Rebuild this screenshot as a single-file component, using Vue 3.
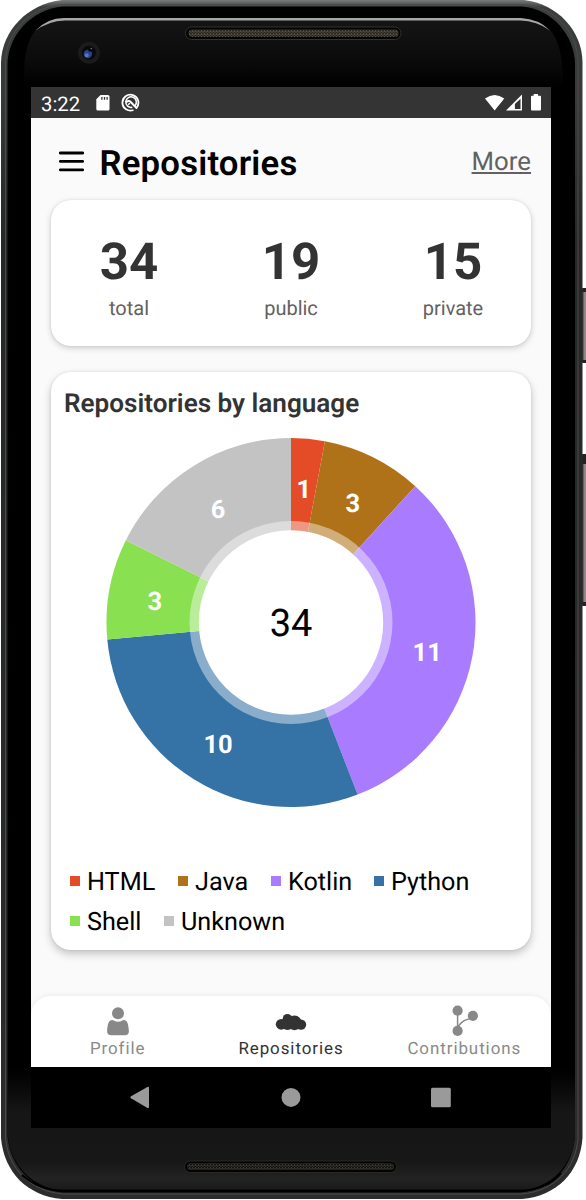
<script setup>
const stats = [
  { value: 34, label: 'total' },
  { value: 19, label: 'public' },
  { value: 15, label: 'private' }
]

const languages = [
  { name: 'HTML', count: 1, color: '#e34c26', width: 108 },
  { name: 'Java', count: 3, color: '#b07219', width: 93 },
  { name: 'Kotlin', count: 11, color: '#a97bff', width: 103 },
  { name: 'Python', count: 10, color: '#3572a5', width: 110 },
  { name: 'Shell', count: 3, color: '#89e051', width: 94 },
  { name: 'Unknown', count: 6, color: '#c3c3c3', width: 130 }
]
const legendRows = [languages.slice(0, 4), languages.slice(4)]

const total = languages.reduce((sum, l) => sum + l.count, 0)
const R = 184.5
const point = (turn, r) => {
  const a = turn * 2 * Math.PI
  return [(r * Math.sin(a)).toFixed(2), (-r * Math.cos(a)).toFixed(2)]
}

let start = 0
const slices = languages.map((l) => {
  const from = start / total
  start += l.count
  const to = start / total
  const [x1, y1] = point(from, R)
  const [x2, y2] = point(to, R)
  const [lx, ly] = point((from + to) / 2, 138.5)
  return { ...l, lx, ly, path: `M0 0L${x1} ${y1}A${R} ${R} 0 0 1 ${x2} ${y2}Z` }
})
</script>

<template>
  <div class="stage">
    <svg class="device" width="586" height="1200" viewBox="0 0 586 1200">
      <defs>
        <linearGradient id="rim" x1="0" x2="0" y1="0" y2="1">
          <stop offset="0" stop-color="#7a7d7c" />
          <stop offset=".006" stop-color="#3c3d3d" />
          <stop offset=".08" stop-color="#383939" />
          <stop offset=".2" stop-color="#262727" />
          <stop offset="1" stop-color="#2c2c2c" />
        </linearGradient>
        <linearGradient id="topGlass" x1="0" x2="0" y1="0" y2="1">
          <stop offset="0" stop-color="#151515" />
          <stop offset=".6" stop-color="#0b0b0b" />
          <stop offset="1" stop-color="#000" />
        </linearGradient>
        <linearGradient id="bottomGlass" x1="0" x2="0" y1="0" y2="1">
          <stop offset="0" stop-color="#000" />
          <stop offset=".35" stop-color="#161616" />
          <stop offset=".76" stop-color="#171717" />
          <stop offset=".9" stop-color="#232323" />
          <stop offset=".98" stop-color="#1b1b1b" />
          <stop offset="1" stop-color="#000" />
        </linearGradient>
        <linearGradient id="key" x1="0" x2="1" y1="0" y2="0">
          <stop offset="0" stop-color="#292626" />
          <stop offset=".4" stop-color="#8c8383" />
          <stop offset="1" stop-color="#aaa1a1" />
        </linearGradient>
        <pattern id="mesh" width="3" height="3" patternUnits="userSpaceOnUse">
          <rect width="3" height="3" fill="#29261f" />
          <path d="M.5 0V2M2 1V3" stroke="#575249" stroke-width=".9" />
        </pattern>
        <pattern id="meshDark" width="3" height="3" patternUnits="userSpaceOnUse">
          <rect width="3" height="3" fill="#14130f" />
          <path d="M.5 0V2M2 1V3" stroke="#3f3c34" stroke-width=".9" />
        </pattern>
      </defs>
      <rect x="581" y="288" width="7" height="75" rx="2" fill="#252323" />
      <rect x="582" y="292" width="6" height="68" fill="url(#key)" />
      <rect x="581" y="454" width="7" height="152" rx="2" fill="#252323" />
      <rect x="582" y="464" width="6" height="138" fill="url(#key)" />
      <path d="M62 0H524C558 4 582 31 582.500 62V1138C580 1172 557 1196 522 1199H62C27 1196 4 1172 1 1138V62C2 31 27 4 62 0Z" fill="url(#rim)" />
      <path d="M62 4.500H524C554 7 577.500 31 578 62V1138C576 1169 554 1191 522 1194H62C31 1191 8 1169 5.500 1138V62C6 31 31 7 62 4.500Z" fill="none" stroke="#4a4c4b" stroke-width="1" />
      <path d="M63 6.500H522C552 9 574.500 35 575 64V1136C573 1166 553 1190 520 1192.500H63C32 1190 10 1166 7.500 1136V64C8 35 32 9 63 6.500Z" fill="#000" />
      <path d="M24 77C24 53 28 39 36 30Q48 19 63 19H520Q538 20 550 30C558 39 562 53 563 77V87H24Z" fill="url(#topGlass)" />
      <path d="M35 31Q47 18 64 18H521Q539 19 550 30.500Q537 21 520 20.500H65Q48 21 35 31Z" fill="#a4a7a5" />
      <path d="M8 1070H575V1136C573 1164 552 1188 520 1191H63C32 1188 10 1164 8 1136Z" fill="url(#bottomGlass)" />
      <path d="M22 1175Q39 1190 63 1191H520Q549 1189 561 1173" fill="none" stroke="#000" stroke-width="2" />

      <rect x="185.500" y="27" width="215.500" height="12.500" rx="6.200" fill="#030303" stroke="#333230" />
      <rect x="188.500" y="29.500" width="210" height="7.500" rx="3.500" fill="url(#mesh)" />
      <rect x="184.500" y="1161" width="212" height="11.500" rx="5.700" fill="#030303" stroke="#292825" />
      <rect x="187" y="1163" width="207" height="7" rx="3.500" fill="url(#meshDark)" />

      <circle cx="89" cy="52.700" r="11" fill="#1b1b1b" />
      <circle cx="89" cy="52.700" r="7" fill="#080910" />
      <circle cx="87.800" cy="54" r="4.200" fill="#2c4385" />
      <circle cx="86.700" cy="55.300" r="2" fill="#5874c8" />
      <circle cx="90" cy="50" r="1.800" fill="#06070d" />
      <circle cx="91.300" cy="48.500" r=".8" fill="#777" />
    </svg>

    <div class="screen">
      <div class="status">
        <span class="clock">3:22</span>
        <svg class="sd" width="14" height="16" viewBox="0 0 14 16">
          <path d="M4.600 0H12Q13.500 0 13.500 1.500V14Q13.500 15.500 12 15.500H1.800Q.3 15.500.3 14V4.300Z" fill="#fff" />
          <path d="M5.900 1.900V4.800M8.500 1.900V4.800M11.100 1.900V4.800" stroke="#343434" stroke-width="1.300" />
        </svg>
        <svg class="agent" width="19" height="19" viewBox="0 0 19 19">
          <g fill="none" stroke="#fff">
            <path d="M15.600 14.700A8 8 0 1 0 12.500 17" stroke-width="1.800" />
            <path d="M14 12.700A5.300 5.300 0 1 0 11.300 14.300" stroke-width="1.500" />
            <path d="M5 9.500Q7.500 6.800 10 9.200L16 15.600" stroke-width="2" />
            <path d="M7 11.600L9 10.200" stroke-width="1.300" />
          </g>
        </svg>
        <svg class="signals" width="57" height="18" viewBox="0 0 57 18">
          <path d="M0 4.600Q9.600-2.600 19.300 4.600L9.650 16.500Z" fill="#fff" />
          <path d="M21 16.500L37 .5V16.500Z" fill="#fff" />
          <path d="M29.900 10L35.500 4.800V15H29.900Z" fill="#343434" />
          <path d="M48.700 0H53V1.700H55Q56 1.700 56 2.800V15.500Q56 16.500 55 16.500H47Q46 16.500 46 15.500V2.800Q46 1.700 47 1.700H48.700Z" fill="#fff" />
        </svg>
      </div>

      <main class="content">
        <header class="header">
          <svg width="25" height="21" viewBox="0 0 25 21">
            <path d="M1.300 2H23.700M1.300 10.400H23.700M1.300 18.800H23.700" stroke="#000" stroke-width="2.800" stroke-linecap="round" />
          </svg>
          <h1>Repositories</h1>
          <a class="more">More</a>
        </header>

        <section class="card stats">
          <div v-for="s in stats" :key="s.label" class="stat">
            <strong>{{ s.value }}</strong>
            <span>{{ s.label }}</span>
          </div>
        </section>

        <section class="card languages">
          <h2>Repositories by language</h2>
          <svg class="pie" width="370" height="370" viewBox="-185 -184.500 370 370">
            <path v-for="s in slices" :key="s.name" :d="s.path" :fill="s.color" />
            <circle r="101.500" fill="#fff" fill-opacity=".42" />
            <circle r="92.200" fill="#fff" />
            <text v-for="s in slices" :key="s.name" class="count" :x="s.lx" :y="s.ly" dy="13.200">{{ s.count }}</text>
            <text class="total" x="0" y="13">{{ total }}</text>
          </svg>
          <div class="legend">
            <div v-for="(row, i) in legendRows" :key="i" class="legend-row">
              <div v-for="l in row" :key="l.name" class="entry" :style="{ width: l.width + 'px' }">
                <i :style="{ background: l.color }"></i>
                <span>{{ l.name }}</span>
              </div>
            </div>
          </div>
        </section>
      </main>

      <nav class="tabs">
        <div class="tab">
          <svg width="32" height="32" viewBox="0 0 32 32" fill="#888">
            <circle cx="16" cy="9.300" r="6" />
            <path d="M9 16.200Q10.500 15.700 11.700 16.500Q16 19 20.300 16.500Q21.500 15.700 23 16.200C25.500 17 26.300 20 26.900 27Q27 31.300 22.500 31.300H9.500Q5 31.300 5.100 27C5.700 20 6.500 17 9 16.200Z" />
          </svg>
          <span>Profile</span>
        </div>
        <div class="tab active">
          <svg width="32" height="32" viewBox="0 0 32 32" fill="#333">
            <circle cx="6.200" cy="20.300" r="5.400" />
            <circle cx="12.400" cy="14.600" r="4.600" />
            <circle cx="12.500" cy="19.300" r="6.600" />
            <circle cx="19.500" cy="18.900" r="7.300" />
            <circle cx="26" cy="20.600" r="5.200" />
          </svg>
          <span>Repositories</span>
        </div>
        <div class="tab">
          <svg width="32" height="32" viewBox="0 0 32 32" fill="#888">
            <path d="M9.600 7V27.500M9.600 23.500Q14.500 14.700 24.500 14.500" fill="none" stroke="#888" stroke-width="1.500" />
            <circle cx="9.600" cy="6.700" r="5.100" />
            <circle cx="9.600" cy="26.900" r="5.100" />
            <circle cx="24.900" cy="11.800" r="5.100" />
          </svg>
          <span>Contributions</span>
        </div>
      </nav>

      <div class="system-nav">
        <svg width="520" height="61" viewBox="0 0 520 61" fill="#9a9a9a">
          <path d="M100 29.200L116 20.200Q118 19.200 118 21V40Q118 41.800 116 40.700L100 31.300Q98.500 30.200 100 29.200Z" />
          <circle cx="260" cy="30.400" r="9.500" />
          <rect x="400" y="20.800" width="19.800" height="19.400" rx="1.500" />
        </svg>
      </div>
    </div>
  </div>
</template>

<style>
body {
  background: #fff;
  overflow: hidden;
}
</style>

<style scoped>
.stage {
  position: relative;
  width: 586px;
  height: 1200px;
  box-sizing: border-box;
  padding: 87px 35px 72px 31px;
  font-family: Roboto, sans-serif;
  text-rendering: geometricPrecision;
}
.device {
  position: absolute;
  inset: 0;
}
.screen {
  position: relative;
  display: flex;
  flex-direction: column;
  width: 520px;
  height: 1041px;
  overflow: hidden;
  background: #fafafa;
}
.status {
  display: flex;
  align-items: center;
  height: 30.500px;
  flex: none;
  padding: 1px 9px 0 10px;
  box-sizing: border-box;
  background: #343434;
  color: #fff;
}
.clock {
  font-size: 20.300px;
  line-height: 30px;
  padding-top: 2px;
  width: 55px;
}
.agent {
  margin-left: 11px;
}
.signals {
  margin-left: auto;
}
.content {
  flex: 1;
  padding: 0 20px;
}
.header {
  display: flex;
  align-items: center;
  height: 82px;
  padding-left: 8px;
  box-sizing: border-box;
}
.header svg {
  margin-top: 5px;
}
h1 {
  margin: 10px 0 0 15.500px;
  font-size: 34.700px;
  line-height: 42px;
  letter-spacing: 0.2px;
  font-weight: 600;
  color: #000;
}
.more {
  margin: 7px 0 0 auto;
  font-size: 25.800px;
  line-height: 32px;
  color: #626262;
  text-decoration: underline;
  text-decoration-thickness: 1.500px;
  text-underline-offset: 2px;
}
.card {
  background: #fff;
  border-radius: 20px;
  box-shadow: 0 2px 6px rgba(0, 0, 0, 0.19), 0 0 2px rgba(0, 0, 0, 0.1);
}
.stats {
  display: flex;
  height: 146.500px;
  box-sizing: border-box;
  padding: 33px 0 0;
  justify-content: center;
}
.stat {
  flex: none;
  width: 162px;
  display: flex;
  flex-direction: column;
  align-items: center;
}
.stat strong {
  font-size: 51px;
  line-height: 60px;
  font-weight: 700;
  color: #333;
}
.stat span {
  margin-top: 3px;
  font-size: 20px;
  line-height: 24px;
  color: #626262;
}
.languages {
  margin-top: 25.500px;
  height: 578.500px;
  box-sizing: border-box;
  padding: 16px 13px 0;
  box-shadow: 0 4px 8px rgba(0, 0, 0, 0.22), 0 0 3px rgba(0, 0, 0, 0.1);
}
h2 {
  margin: 0;
  font-size: 26.100px;
  line-height: 32px;
  font-weight: 600;
  color: #333;
}
.pie {
  display: block;
  margin: 18px 0 0 42px;
}
.count {
  fill: #fff;
  font-size: 25.500px;
  font-weight: 700;
  text-anchor: middle;
}
.total {
  font-size: 38px;
  text-anchor: middle;
}
.legend {
  margin: 53px 0 0 6px;
}
.legend-row {
  display: flex;
  height: 40px;
}
.entry {
  display: flex;
  flex: none;
  align-items: center;
  height: 40px;
  font-size: 25.200px;
  line-height: 32px;
  color: #000;
}
.entry span {
  padding-top: 4px;
}
.entry i {
  width: 10px;
  height: 10px;
  margin-right: 7px;
}
.tabs {
  display: flex;
  flex: none;
  height: 71.500px;
  box-sizing: border-box;
  padding-top: 9px;
  background: #fff;
  border-radius: 20px 20px 0 0;
  box-shadow: 0 -1px 5px rgba(0, 0, 0, 0.06);
}
.tab {
  flex: 1;
  display: flex;
  flex-direction: column;
  align-items: center;
  font-size: 16.900px;
  line-height: 22px;
  letter-spacing: 0.950px;
  color: #8a8a8a;
}
.tab svg {
  margin-top: -1px;
  margin-bottom: 2px;
}
.tab.active {
  color: #333;
}
.system-nav {
  flex: none;
  height: 61px;
  background: #000;
}
.system-nav svg {
  display: block;
}
</style>
